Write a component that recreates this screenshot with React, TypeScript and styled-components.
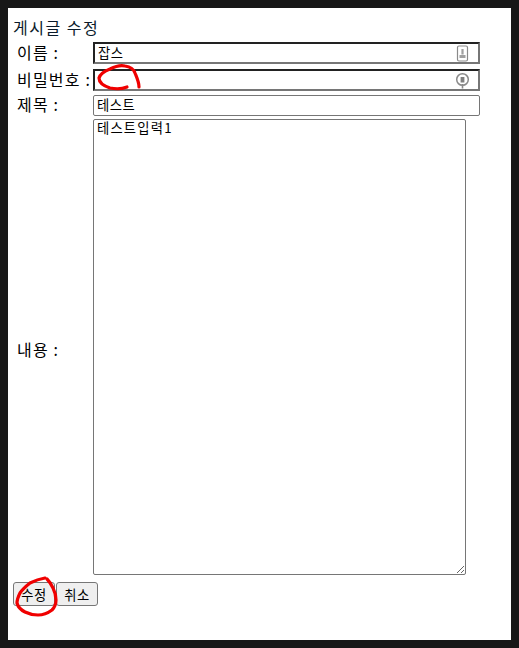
import React from "react";
import styled, { createGlobalStyle } from "styled-components";

const Global = createGlobalStyle`
  html, body { margin: 0; padding: 0; background: #171717; }
  body { width: 519px; height: 648px; overflow: hidden; }
  * { box-sizing: border-box; }
`;

const Page = styled.div`
  position: relative;
  margin: 8px 8px 0;
  width: 503px;
  height: 632px;
  background: #fff;
  padding: 9px 0 0 5px;
  font-family: "Noto Sans CJK KR", "Noto Sans", sans-serif;
  color: #000;
`;

const Title = styled.div`
  font-size: 16px;
  line-height: 20px;
  height: 25px;
  letter-spacing: 1.5px;
  color: #0a1a2a;
`;

const Form = styled.form`
  display: flex;
  flex-direction: column;
  padding-left: 4px;
`;

const Row = styled.div<{ $mb: number }>`
  display: flex;
  align-items: center;
  margin-bottom: ${(p) => p.$mb}px;
`;

const Label = styled.label`
  flex: 0 0 76px;
  font-size: 16px;
  line-height: 18px;
  white-space: nowrap;
  letter-spacing: 1.2px;
  padding-bottom: 3px;
`;

const Field = styled.div<{ $h: number }>`
  position: relative;
  width: 387px;
  height: ${(p) => p.$h}px;
`;

const TextInput = styled.input<{ $strong?: boolean }>`
  display: block;
  width: 100%;
  height: 100%;
  padding: 0 3px 2px;
  font: 13.3px "Noto Sans CJK KR", sans-serif;
  letter-spacing: 0.5px;
  color: #000;
  background: #fff;
  outline: none;
  border-radius: ${(p) => (p.$strong ? "0" : "2px")};
  border-style: solid;
  border-width: ${(p) => (p.$strong ? "2px" : "1px")};
  border-color: ${(p) =>
    p.$strong ? "#222 #767676 #767676 #222" : "#767676"};
`;

const FieldIcon = styled.svg`
  position: absolute;
  right: 9px;
  top: 2px;
  width: 16px;
  height: 18px;
`;

const ContentLabel = styled(Label)`
  padding-top: 6px;
`;

const TextArea = styled.textarea`
  display: block;
  width: 373px;
  height: 456px;
  margin: 0;
  padding: 0 3px;
  font: 13.3px/16px "Noto Sans CJK KR", sans-serif;
  letter-spacing: 1.2px;
  color: #000;
  background: #fff;
  border: 1px solid #767676;
  border-radius: 2px;
  outline: none;
`;

const Actions = styled.div`
  display: flex;
  gap: 1px;
  margin-top: 7px;
`;

const Button = styled.button`
  width: 42px;
  height: 24px;
  padding: 0;
  font: 13.3px "Noto Sans CJK KR", sans-serif;
  letter-spacing: 0.5px;
  color: #000;
  background: #efefef;
  border: 1px solid #767676;
  border-radius: 3px;
`;

const Scribble = styled.svg`
  position: absolute;
  left: 0;
  top: 0;
  width: 503px;
  height: 632px;
  pointer-events: none;
`;

export default function App() {
  return (
    <>
      <Global />
      <Page>
        <Title>게시글 수정</Title>
        <Form>
          <Row $mb={5}>
            <Label>이름 :</Label>
            <Field $h={22}>
              <TextInput $strong defaultValue="잡스" />
              <FieldIcon viewBox="0 0 16 18" fill="none">
                <rect x="2.5" y="2" width="10" height="15" rx="1.5" stroke="#8a8a8a" strokeWidth="1.2" />
                <rect x="4.5" y="11" width="6" height="3" fill="#a0a0a0" />
                <rect x="6.4" y="5" width="2.2" height="5.5" fill="#a0a0a0" />
              </FieldIcon>
            </Field>
          </Row>
          <Row $mb={4}>
            <Label>비밀번호 :</Label>
            <Field $h={22}>
              <TextInput $strong />
              <FieldIcon viewBox="0 0 16 18" fill="none">
                <circle cx="7.5" cy="8.5" r="5.8" stroke="#8a8a8a" strokeWidth="1.5" />
                <rect x="5.6" y="6" width="3.8" height="5.5" fill="#808080" />
                <path d="M7.5 13v4.5" stroke="#8a8a8a" strokeWidth="1.6" />
              </FieldIcon>
            </Field>
          </Row>
          <Row $mb={3}>
            <Label>제목 :</Label>
            <Field $h={21}>
              <TextInput defaultValue="테스트" />
            </Field>
          </Row>
          <Row $mb={0}>
            <ContentLabel>내용 :</ContentLabel>
            <TextArea defaultValue="테스트입력1" />
          </Row>
        </Form>
        <Actions>
          <Button type="button">수정</Button>
          <Button type="button">취소</Button>
        </Actions>
        <Scribble viewBox="0 0 503 632" fill="none">
          <path
            d="M119 79 C114 81 107 81 102 80 C96 78 91 75 91 70 C92 66 97 63 102 61 C108 58 113 57 117 58 C123 59 126 62 127 65 C129 70 131 74 131 79"
            stroke="#f00000"
            strokeWidth="3.2"
            strokeLinecap="round"
          />
          <path
            d="M37 570 C31 571 26 573 22 575 C17 579 14 582 12 585 C10 589 9 592 9 595 C10 599 13 602 17 604 C21 606 26 607 30 607 C35 607 40 605 44 602 C47 599 48 596 48 592 C48 588 47 584 45 580 C43 576 41 573 39 571"
            stroke="#f00000"
            strokeWidth="3.2"
            strokeLinecap="round"
          />
        </Scribble>
      </Page>
    </>
  );
}
